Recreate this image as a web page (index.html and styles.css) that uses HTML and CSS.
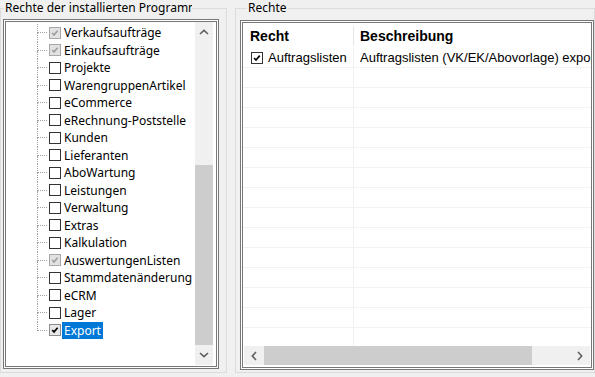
FILE: index.html
```html
<!DOCTYPE html>
<html lang="de">
<head>
    <meta charset="UTF-8">
    <title>Rechte</title>
    <link rel="stylesheet" href="styles.css">
</head>
<body>
    <div class="window">
        <fieldset class="group group-programs">
            <legend class="group-title">Rechte der installierten Programme</legend>
            <div class="listbox">
                <ul class="tree">
                    <li class="node"><span class="branch"></span><span class="check check-gray"><svg viewBox="0 0 12 12"><path d="M2.6 6 4.8 8.3 9.2 3.3"/></svg></span><span class="label">Verkaufsaufträge</span></li>
                    <li class="node"><span class="branch"></span><span class="check check-gray"><svg viewBox="0 0 12 12"><path d="M2.6 6 4.8 8.3 9.2 3.3"/></svg></span><span class="label">Einkaufsaufträge</span></li>
                    <li class="node"><span class="branch"></span><span class="check"></span><span class="label">Projekte</span></li>
                    <li class="node"><span class="branch"></span><span class="check"></span><span class="label">WarengruppenArtikel</span></li>
                    <li class="node"><span class="branch"></span><span class="check"></span><span class="label">eCommerce</span></li>
                    <li class="node"><span class="branch"></span><span class="check"></span><span class="label">eRechnung-Poststelle</span></li>
                    <li class="node"><span class="branch"></span><span class="check"></span><span class="label">Kunden</span></li>
                    <li class="node"><span class="branch"></span><span class="check"></span><span class="label">Lieferanten</span></li>
                    <li class="node"><span class="branch"></span><span class="check"></span><span class="label">AboWartung</span></li>
                    <li class="node"><span class="branch"></span><span class="check"></span><span class="label">Leistungen</span></li>
                    <li class="node"><span class="branch"></span><span class="check"></span><span class="label">Verwaltung</span></li>
                    <li class="node"><span class="branch"></span><span class="check"></span><span class="label">Extras</span></li>
                    <li class="node"><span class="branch"></span><span class="check"></span><span class="label">Kalkulation</span></li>
                    <li class="node"><span class="branch"></span><span class="check check-gray"><svg viewBox="0 0 12 12"><path d="M2.6 6 4.8 8.3 9.2 3.3"/></svg></span><span class="label">AuswertungenListen</span></li>
                    <li class="node"><span class="branch"></span><span class="check"></span><span class="label">Stammdatenänderung</span></li>
                    <li class="node"><span class="branch"></span><span class="check"></span><span class="label">eCRM</span></li>
                    <li class="node"><span class="branch"></span><span class="check"></span><span class="label">Lager</span></li>
                    <li class="node"><span class="branch"></span><span class="check check-on"><svg viewBox="0 0 12 12"><path d="M2.6 6 4.8 8.3 9.2 3.3"/></svg></span><span class="label selected">Export</span></li>
                </ul>
                <div class="vscroll">
                    <span class="arrow"><svg viewBox="0 0 10 6"><path d="M1 5 5 1.3 9 5"/></svg></span>
                    <div class="vtrack"><div class="vthumb"></div></div>
                    <span class="arrow"><svg viewBox="0 0 10 6"><path d="M1 1 5 4.7 9 1"/></svg></span>
                </div>
            </div>
        </fieldset>

        <fieldset class="group group-rights">
            <legend class="group-title">Rechte</legend>
            <div class="listview">
                <div class="grid">
                    <div class="grid-head">
                        <span class="col-recht">Recht</span>
                        <span class="col-desc">Beschreibung</span>
                    </div>
                    <div class="grid-row">
                        <span class="cell-recht"><span class="lv-check"><svg viewBox="0 0 12 12"><path d="M2.5 6 4.8 8.4 9.3 3.2"/></svg></span>Auftragslisten</span>
                        <span class="cell-desc">Auftragslisten (VK/EK/Abovorlage) exportieren</span>
                    </div>
                    <div class="grid-row"><span class="cell-recht"></span><span class="cell-desc"></span></div>
                    <div class="grid-row"><span class="cell-recht"></span><span class="cell-desc"></span></div>
                    <div class="grid-row"><span class="cell-recht"></span><span class="cell-desc"></span></div>
                    <div class="grid-row"><span class="cell-recht"></span><span class="cell-desc"></span></div>
                    <div class="grid-row"><span class="cell-recht"></span><span class="cell-desc"></span></div>
                    <div class="grid-row"><span class="cell-recht"></span><span class="cell-desc"></span></div>
                    <div class="grid-row"><span class="cell-recht"></span><span class="cell-desc"></span></div>
                    <div class="grid-row"><span class="cell-recht"></span><span class="cell-desc"></span></div>
                    <div class="grid-row"><span class="cell-recht"></span><span class="cell-desc"></span></div>
                    <div class="grid-row"><span class="cell-recht"></span><span class="cell-desc"></span></div>
                    <div class="grid-row"><span class="cell-recht"></span><span class="cell-desc"></span></div>
                    <div class="grid-row"><span class="cell-recht"></span><span class="cell-desc"></span></div>
                    <div class="grid-row"><span class="cell-recht"></span><span class="cell-desc"></span></div>
                    <div class="grid-row"><span class="cell-recht"></span><span class="cell-desc"></span></div>
                </div>
                <div class="hscroll">
                    <span class="arrow arrow-h"><svg viewBox="0 0 6 10"><path d="M5 1 1.3 5 5 9"/></svg></span>
                    <div class="htrack"><div class="hthumb"></div></div>
                    <span class="arrow arrow-h"><svg viewBox="0 0 6 10"><path d="M1 1 4.7 5 1 9"/></svg></span>
                </div>
            </div>
        </fieldset>
    </div>
</body>
</html>
```

FILE: styles.css
```css
html,body{
    margin: 0;
    padding: 0;
}
body{
    width: 595px;
    height: 377px;
    overflow: hidden;
    background: #f0f0f0;
    font-family: "Noto Sans", sans-serif;
    font-size: 12px;
    color: #000;
}
.window{
    display: flex;
    gap: 8px;
}

/* group boxes */
.group{
    margin: 0;
    min-width: 0;
    box-sizing: border-box;
    border: 1px solid #dcdcdc;
    height: 373px;
}
.group-title{
    padding: 0 1px;
    line-height: 16px;
    white-space: nowrap;
    overflow: hidden;
}
.group-programs{
    width: 227px;
    padding: 3px 7px 3px 2px;
}
.group-programs .group-title{
    margin-left: 1px;
    width: 186px;
}
.group-rights{
    width: 360px;
    padding: 4px 0 2px 4px;
}
.group-rights .group-title{
    margin-left: 7px;
}

/* tree list */
.listbox{
    display: flex;
    height: 350px;
    box-sizing: border-box;
    border: 3px double #777;
    background: #fff;
}
.tree{
    flex: 1;
    list-style: none;
    margin: 0;
    padding: 2px 0 0 31px;
    overflow: hidden;
}
.node{
    display: flex;
    align-items: center;
    height: 17.5px;
}
.branch{
    align-self: stretch;
    width: 10px;
    margin-right: 2px;
    display: flex;
    flex-direction: column;
}
.branch::before{
    content: "";
    flex: 1;
    border-left: 1px dotted #a0a0a0;
    border-bottom: 1px dotted #a0a0a0;
}
.branch::after{
    content: "";
    flex: 1;
    border-left: 1px dotted #a0a0a0;
}
.node:last-child .branch::after{
    border-left-color: transparent;
}
.check{
    width: 12px;
    height: 12px;
    box-sizing: border-box;
    border: 1px solid #333;
    background: #fff;
    flex: none;
    display: flex;
    margin-right: 1px;
}
.check svg{
    width: 10px;
    height: 10px;
    fill: none;
    stroke-width: 2;
}
.check-gray{
    border-color: #a8a8a8;
    background: #e2e2e2;
}
.check-gray svg{
    stroke: #a0a0a0;
}
.check-on{
    border-color: #8c8c8c;
    background: #e8e8e8;
}
.check-on svg{
    stroke: #000;
}
.label{
    padding: 0 2px;
    line-height: 17px;
    white-space: nowrap;
}
.selected{
    background: #0078d7;
    color: #fff;
}

/* scrollbars */
.vscroll{
    width: 18px;
    margin: 0 3px 1px 0;
    display: flex;
    flex-direction: column;
    background: #f0f0f0;
}
.arrow{
    display: flex;
    align-items: center;
    justify-content: center;
    height: 20px;
    flex: none;
}
.arrow svg{
    width: 10px;
    height: 6px;
    fill: none;
    stroke: #606060;
    stroke-width: 1.6;
}
.vtrack{
    flex: 1;
    display: flex;
    flex-direction: column;
    justify-content: flex-end;
}
.vthumb{
    height: 180px;
    background: #cdcdcd;
}
.hscroll{
    display: flex;
    height: 19px;
    margin: 0 1px 2px;
    background: #f0f0f0;
}
.arrow-h{
    width: 20px;
    height: auto;
}
.arrow-h svg{
    width: 6px;
    height: 10px;
}
.htrack{
    flex: 1;
    display: flex;
}
.hthumb{
    width: 268px;
    background: #cdcdcd;
}

/* list view */
.listview{
    display: flex;
    flex-direction: column;
    height: 350px;
    box-sizing: border-box;
    border: 3px double #777;
    background: #fff;
}
.grid{
    flex: 1;
    overflow: hidden;
    font-family: "Liberation Sans", Arial, sans-serif;
    font-size: 13px;
}
.grid-head{
    display: flex;
    align-items: center;
    height: 25px;
    font-weight: bold;
    font-size: 14px;
}
.col-recht{
    width: 111px;
    box-sizing: border-box;
    padding-left: 7px;
    border-right: 1px solid #e5e5e5;
    line-height: 20px;
}
.col-desc{
    padding-left: 6px;
}
.grid-row{
    display: flex;
    height: 20px;
    box-sizing: border-box;
    border-bottom: 1px solid #f2f2f2;
}
.cell-recht{
    width: 111px;
    box-sizing: border-box;
    border-right: 1px solid #f0f0f0;
    padding-left: 8px;
    display: flex;
    align-items: center;
    gap: 5px;
}
.cell-desc{
    flex: 1;
    min-width: 0;
    padding-left: 6px;
    line-height: 19px;
    white-space: nowrap;
    overflow: hidden;
}
.lv-check{
    width: 12px;
    height: 12px;
    box-sizing: border-box;
    border: 1px solid #333;
    display: flex;
}
.lv-check svg{
    width: 10px;
    height: 10px;
    fill: none;
    stroke: #000;
    stroke-width: 2;
}
```
